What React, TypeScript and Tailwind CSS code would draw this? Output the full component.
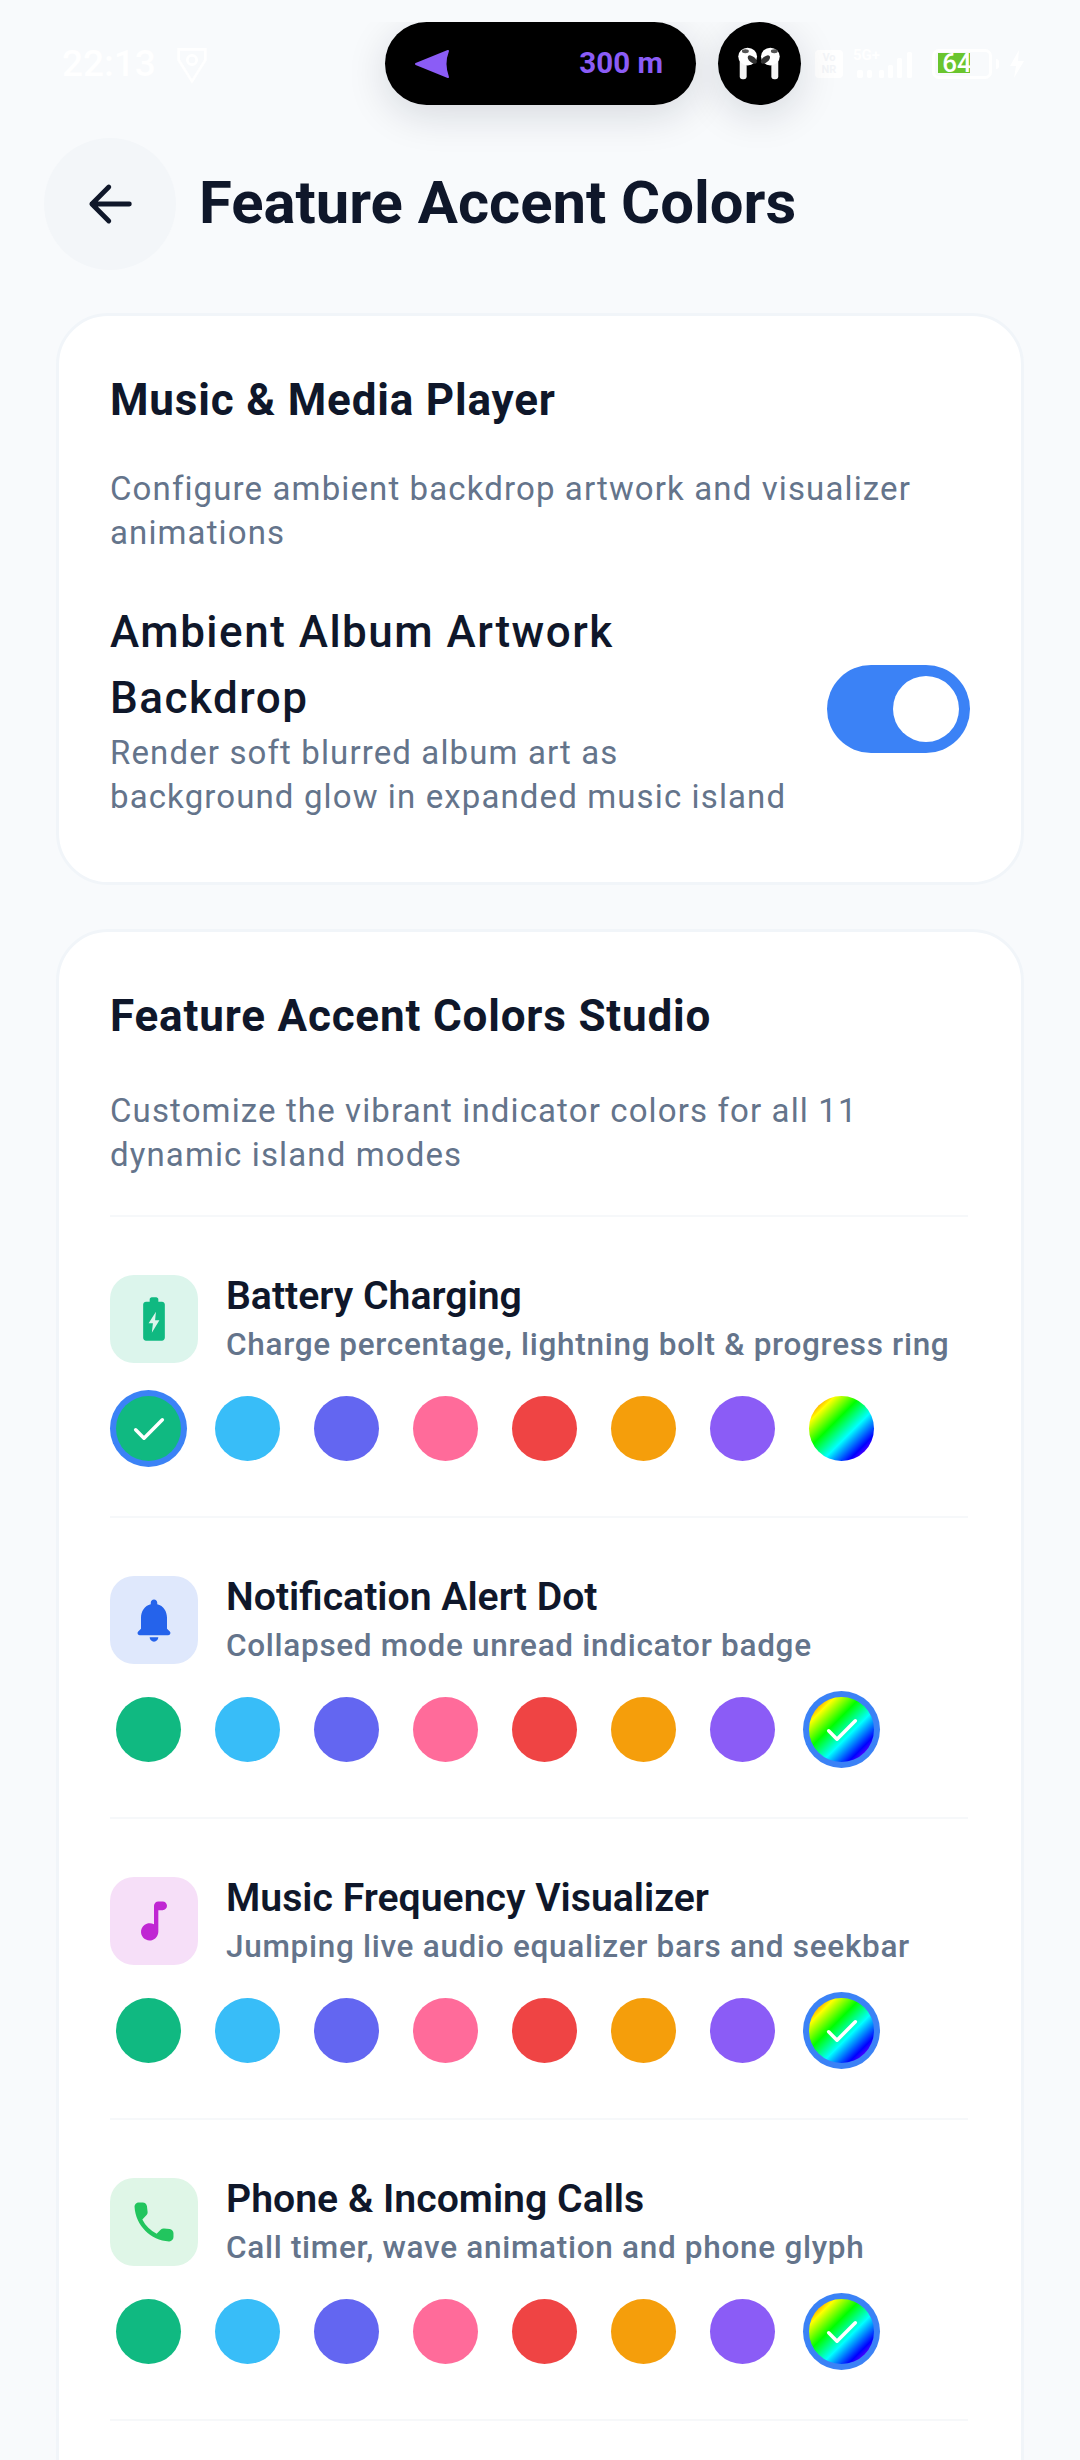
const rainbow = "bg-[linear-gradient(135deg,#ff0000,#ffff00,#00ff00,#00ffff,#0000ff,#ff00ff)]";

const swatches = [
  "bg-[#10b981]",
  "bg-[#38bdf8]",
  "bg-[#6366f1]",
  "bg-[#ff6b9a]",
  "bg-[#ef4444]",
  "bg-[#f59e0b]",
  "bg-[#8b5cf6]",
  rainbow,
];

const features = [
  {
    title: "Battery Charging",
    sub: "Charge percentage, lightning bolt & progress ring",
    tile: "bg-[#dcf5ec]",
    icon: "text-[#10b981]",
    selected: 0,
    path: "M15.67 4H14V3c0-.55-.45-1-1-1h-2c-.55 0-1 .45-1 1v1H8.33C7.6 4 7 4.6 7 5.33v15.33C7 21.4 7.6 22 8.33 22h7.33c.74 0 1.34-.6 1.34-1.33V5.33C17 4.6 16.4 4 15.67 4zM12.9 8.6L9.5 14h2l-.5 4.3 3.5-5.7h-2z",
  },
  {
    title: "Notification Alert Dot",
    sub: "Collapsed mode unread indicator badge",
    tile: "bg-[#dfe8fc]",
    icon: "text-[#2563eb]",
    selected: 7,
    path: "M12 22c1.1 0 2-.9 2-2h-4c0 1.1.9 2 2 2zm6-6v-5c0-3.07-1.63-5.64-4.5-6.32V4c0-.83-.67-1.5-1.5-1.5s-1.5.67-1.5 1.5v.68C7.64 5.36 6 7.92 6 11v5l-1.29 1.29c-.63.63-.19 1.71.7 1.71h13.17c.89 0 1.34-1.08.71-1.71L18 16z",
  },
  {
    title: "Music Frequency Visualizer",
    sub: "Jumping live audio equalizer bars and seekbar",
    tile: "bg-[#f6dff8]",
    icon: "text-[#c026d3]",
    selected: 7,
    path: "M12 5v8.55c-.94-.54-2.1-.75-3.33-.32-1.34.47-2.37 1.67-2.61 3.07-.46 2.74 1.86 5.08 4.59 4.65 1.96-.31 3.35-2.11 3.35-4.1V7h2c1.1 0 2-.9 2-2s-.9-2-2-2h-2c-1.1 0-2 .9-2 2z",
  },
  {
    title: "Phone & Incoming Calls",
    sub: "Call timer, wave animation and phone glyph",
    tile: "bg-[#dff6e7]",
    icon: "text-[#22c55e]",
    selected: 7,
    path: "M19.23 15.26l-2.54-.29c-.61-.07-1.21.14-1.64.57l-1.84 1.84c-2.83-1.44-5.15-3.75-6.59-6.59l1.85-1.85c.43-.43.64-1.03.57-1.64l-.29-2.52c-.12-1.01-.97-1.77-1.99-1.77H5.03c-1.13 0-2.07.94-2 2.07.53 8.54 7.36 15.36 15.89 15.89 1.13.07 2.07-.87 2.07-2v-1.73c.01-1.01-.75-1.86-1.76-1.98z",
  },
];

function Swatch({ color, selected }: { color: string; selected: boolean }) {
  return (
    <div className={`flex h-[77px] w-[77px] items-center justify-center rounded-full ${selected ? "bg-[#3b82f6]" : ""}`}>
      <div className={`flex h-[65px] w-[65px] items-center justify-center rounded-full ${color}`}>
        {selected && (
          <svg viewBox="0 0 24 24" className="h-[40px] w-[40px] text-white" fill="none" stroke="currentColor" strokeWidth="2.1" strokeLinecap="round" strokeLinejoin="round">
            <path d="M4 12.5l5 5L20 6.5" />
          </svg>
        )}
      </div>
    </div>
  );
}

function FeatureRow({ item }: { item: (typeof features)[number] }) {
  return (
    <div className="border-b-2 border-[#f6f8fa] pt-[58px] pb-[49px]">
      <div className="flex items-start gap-[28px]">
        <div className={`flex h-[88px] w-[88px] shrink-0 items-center justify-center rounded-[24px] ${item.tile}`}>
          <svg viewBox="0 0 24 24" className={`h-[52px] w-[52px] ${item.icon}`} fill="currentColor" fillRule="evenodd">
            <path d={item.path} />
          </svg>
        </div>
        <div className="h-[88px] min-w-0">
          <div className="text-[39.2px] leading-[42px] font-semibold whitespace-nowrap text-[#0f172a]">{item.title}</div>
          <div className="mt-[10px] text-[31.5px] leading-[36px] font-medium tracking-[0.7px] whitespace-nowrap text-[#64748b]">{item.sub}</div>
        </div>
      </div>
      <div className="mt-[27px] flex gap-[22px]">
        {swatches.map((color, i) => (
          <Swatch key={i} color={color} selected={i === item.selected} />
        ))}
      </div>
    </div>
  );
}

function StatusBar() {
  return (
    <div className="flex h-[138px] items-start justify-between pt-[44px] pr-[55px] pl-[62px] text-white">
      <div className="flex items-center gap-[20px]">
        <span className="text-[37px] leading-[40px] font-medium">22:13</span>
        <svg viewBox="0 0 24 30" className="h-[40px] w-[32px]" fill="none" stroke="currentColor" strokeWidth="2">
          <path d="M2 4h20v8L12 28 2 12z" />
          <circle cx="12" cy="12" r="3.5" />
        </svg>
      </div>
      <div className="flex items-center gap-[10px] pt-[5px]">
        <div className="flex h-[28px] w-[28px] flex-col items-center justify-center rounded-[4px] bg-white text-[11px] leading-[12px] font-bold text-[#f3f5f8]">
          <span>Vo</span>
          <span>NR</span>
        </div>
        <div className="relative mr-[5px] h-[28px] w-[64px]">
          <span className="absolute top-[-6px] left-0 text-[15px] font-bold">5G+</span>
          <svg viewBox="0 0 64 28" className="h-[28px] w-[64px]" fill="currentColor">
            <rect x="4" y="20" width="6" height="8" rx="2" />
            <rect x="14" y="20" width="5" height="8" rx="2" />
            <rect x="26" y="20" width="5" height="8" rx="1.5" />
            <rect x="35" y="15" width="5" height="13" rx="1.5" />
            <rect x="44" y="8" width="5" height="20" rx="1.5" />
            <rect x="54" y="2" width="5" height="26" rx="1.5" />
          </svg>
        </div>
        <div className="flex items-center gap-[4px]">
          <div className="relative h-[30px] w-[60px] rounded-[7px] border-[3px] border-white">
            <div className="absolute top-[1px] left-[3px] flex h-[20px] w-[32px] items-center justify-center overflow-hidden bg-[#6ac52e] pl-[6px] text-[26px] font-medium text-white">64</div>
          </div>
          <div className="h-[10px] w-[3px] rounded-r bg-white" />
        </div>
        <svg viewBox="0 0 16 28" className="h-[28px] w-[16px]" fill="currentColor">
          <path d="M10 0L1 16h6l-2 12 10-17H9z" />
        </svg>
      </div>
    </div>
  );
}

function Island() {
  return (
    <div className="absolute top-[22px] left-[330px] flex h-[140px] w-[530px] gap-[22px] overflow-hidden px-[55px]">
      <div className="flex h-[83px] w-[311px] items-center justify-between rounded-full bg-black pr-[33px] pl-[29px] shadow-[0_10px_40px_rgba(15,23,42,0.14)]">
        <svg viewBox="0 0 36 30" className="h-[30px] w-[36px]" fill="#8b5cf6" stroke="#8b5cf6" strokeWidth="2" strokeLinejoin="round">
          <path d="M2 15L34 2Q29 15 34 28z" />
        </svg>
        <span className="text-[29.5px] font-bold text-[#8b5cf6]">300 m</span>
      </div>
      <div className="h-[83px] w-[83px] shrink-0 rounded-full bg-black shadow-[0_10px_40px_rgba(15,23,42,0.14)]">
        <svg viewBox="0 0 84 84" className="h-[83px] w-[83px]">
          <rect x="22" y="33" width="7" height="25" rx="3" fill="#f4f4f4" />
          <rect x="54" y="33" width="7" height="25" rx="3" fill="#f4f4f4" />
          <ellipse cx="30" cy="35" rx="9.5" ry="9" fill="#fff" />
          <ellipse cx="53" cy="35" rx="9.5" ry="9" fill="#fff" />
          <ellipse cx="34.7" cy="38" rx="5.5" ry="3" fill="#333" transform="rotate(40 34.7 38)" />
          <ellipse cx="48" cy="38" rx="5.5" ry="3" fill="#333" transform="rotate(-40 48 38)" />
          <ellipse cx="27.7" cy="29.7" rx="3.5" ry="2" fill="#555" />
          <ellipse cx="57" cy="29.7" rx="3.5" ry="2" fill="#555" />
        </svg>
      </div>
    </div>
  );
}

export default function App() {
  return (
    <div className="relative h-[2460px] overflow-hidden bg-[#f8fafc] font-['Roboto',sans-serif]">
      <StatusBar />
      <Island />

      {/* header */}
      <div className="flex items-center gap-[23px] pl-[44px]">
        <div className="flex h-[132px] w-[132px] items-center justify-center rounded-full bg-[#f3f6f9]">
          <svg viewBox="0 0 24 24" className="h-[58px] w-[58px] text-[#0f172a]" fill="none" stroke="currentColor" strokeWidth="2" strokeLinecap="round" strokeLinejoin="round">
            <path d="M20 12H4.5M11.5 5l-7 7 7 7" />
          </svg>
        </div>
        <h1 className="-mt-[3px] text-[59.8px] leading-[70px] font-bold text-[#0f172a]">Feature Accent Colors</h1>
      </div>

      {/* ambient card */}
      <div className="mx-[56px] mt-[43px] h-[572px] rounded-[52px] border-[3px] border-[#f1f5f9] bg-white pt-[54px] pr-[51px] pl-[51px]">
        <h2 className="text-[44px] leading-[60px] font-bold tracking-[0.82px] text-[#0f172a]">Music &amp; Media Player</h2>
        <p className="mt-[37px] text-[33px] leading-[44px] tracking-[1.12px] text-[#64748b]">Configure ambient backdrop artwork and visualizer animations</p>
        <div className="mt-[44px] flex items-center justify-between">
          <div className="w-[700px]">
            <div className="text-[44px] leading-[66px] font-medium tracking-[1.5px] text-[#0f172a]">Ambient Album Artwork Backdrop</div>
            <div className="text-[33px] leading-[44px] tracking-[1.12px] text-[#64748b]">Render soft blurred album art as background glow in expanded music island</div>
          </div>
          <div className="flex h-[88px] w-[143px] items-center justify-end rounded-full bg-[#3b82f6] pr-[11px]">
            <div className="h-[66px] w-[66px] rounded-full bg-white" />
          </div>
        </div>
      </div>

      {/* accent studio card */}
      <div className="mx-[56px] mt-[44px] rounded-[52px] border-[3px] border-[#f1f5f9] bg-white pt-[54px] pr-[53px] pb-[200px] pl-[51px]">
        <h2 className="text-[44px] leading-[60px] font-bold tracking-[0.82px] text-[#0f172a]">Feature Accent Colors Studio</h2>
        <p className="mt-[43px] text-[33px] leading-[44px] tracking-[1.12px] text-[#64748b]">Customize the vibrant indicator colors for all 11 dynamic island modes</p>
        <div className="mt-[38px] border-b-2 border-[#f6f8fa]" />
        {features.map((item) => (
          <FeatureRow key={item.title} item={item} />
        ))}
      </div>
    </div>
  );
}
